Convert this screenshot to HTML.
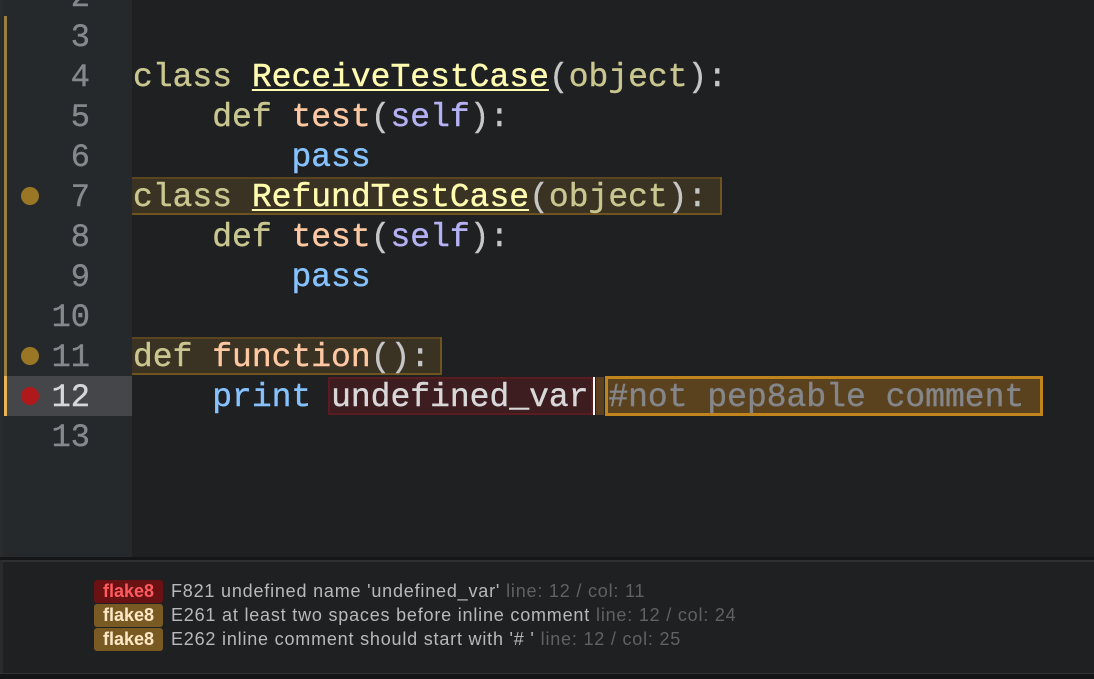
<!DOCTYPE html>
<html><head><meta charset="utf-8"><style>
body{margin:0;width:1094px;height:678px;background:#1f2022;overflow:hidden;position:relative;font-family:"Liberation Mono",monospace}
.gut{position:absolute;left:3px;top:0;width:129px;height:557px;background:#26292c}
.lb{position:absolute;left:0;top:0;width:3px;height:678px;background:#2a2b2d}
.gb{position:absolute;left:4px;top:16px;width:3px;height:360px;background:#9c7e45}
.gb2{position:absolute;left:4px;top:376px;width:3px;height:40px;background:#e6b55a}
.cur{position:absolute;left:7px;top:376px;width:125px;height:40px;background:#45464a}
.ln{position:absolute;width:90px;text-align:right;left:0;font-size:32px;color:#85888c;height:40px;line-height:44px;-webkit-text-stroke:0.4px currentColor}
.dot{position:absolute;left:21px;width:18px;height:18px;border-radius:50%}
.code{position:absolute;left:133px;font-size:33px;height:40px;line-height:44px;white-space:pre;color:#ccc;-webkit-text-stroke:0.4px currentColor}
.k{color:#c9c78f}.c{color:#fffcb0;text-decoration:underline;text-decoration-thickness:2px;text-underline-offset:3px}
.f{color:#fdc8a2}.s{color:#b4b2f5}.p{color:#86c2ff}.o{color:#c5c6c8}.w{color:#d8d8d8}.cm{color:#85868a}
.hl{position:absolute;background:#3a3222;box-shadow:inset 0 -2px 0 #6e5520,inset -2px 0 0 #6e5520,inset 0 2px 0 #5a4520}
.panel{position:absolute;left:3px;top:560px;width:1091px;height:113px;background:#1f2022;border-top:2px solid #2e3033}
.sep{position:absolute;left:0;top:557px;width:1094px;height:3px;background:#151617}
.bot{position:absolute;left:0;top:673px;width:1094px;height:5px;background:#141516;border-top:1px solid #333}
.row{position:absolute;left:94px;font-family:"Liberation Sans Narrow","Liberation Sans",sans-serif;font-size:18px;height:23px;line-height:23px;white-space:nowrap;color:#b8b9bb;letter-spacing:0.8px}
.b{display:inline-block;width:69px;text-align:center;border-radius:3px;font-weight:bold;margin-right:8px;color:#fde8c8;background:#7a5a23;letter-spacing:0}
.b.r{background:#6a1114;color:#ff5a5e}
.g{color:#5f6165;margin-left:6px}
</style></head><body>
<div class="gut"></div><div class="lb"></div>
<div class="cur"></div>
<div class="gb"></div><div class="gb2"></div>
<div class="ln" style="top:-24px">2</div>
<div class="ln" style="top:16px">3</div>
<div class="ln" style="top:56px">4</div>
<div class="ln" style="top:96px">5</div>
<div class="ln" style="top:136px">6</div>
<div class="ln" style="top:176px">7</div>
<div class="ln" style="top:216px">8</div>
<div class="ln" style="top:256px">9</div>
<div class="ln" style="top:296px">10</div>
<div class="ln" style="top:336px">11</div>
<div class="ln" style="top:376px;color:#d6d7d8">12</div>
<div class="ln" style="top:416px">13</div>
<div class="dot" style="top:187px;background:#9a7724"></div>
<div class="dot" style="top:347px;background:#9a7724"></div>
<div class="dot" style="top:387px;background:#b0191c"></div>
<div class="hl" style="left:132px;top:177px;width:590px;height:38px"></div>
<div class="hl" style="left:132px;top:337px;width:310px;height:38px"></div>
<div style="position:absolute;left:328px;top:377px;width:265px;height:38px;background:#3d1d20;box-shadow:inset 0 0 0 2px #5a1c20"></div>
<div style="position:absolute;left:593px;top:377px;width:2px;height:38px;background:#fff"></div>
<div style="position:absolute;left:596px;top:377px;width:8px;height:38px;background:#5c3f1e"></div>
<div style="position:absolute;left:605px;top:376px;width:438px;height:40px;background:#5a421f;box-shadow:inset 0 0 0 3px #c0841c"></div>
<div class="code" style="top:56px"><span class="k">class</span> <span class="c">ReceiveTestCase</span><span class="o">(</span><span class="k">object</span><span class="o">):</span></div>
<div class="code" style="top:96px">    <span class="k">def</span> <span class="f">test</span><span class="o">(</span><span class="s">self</span><span class="o">):</span></div>
<div class="code" style="top:136px">        <span class="p">pass</span></div>
<div class="code" style="top:176px"><span class="k">class</span> <span class="c">RefundTestCase</span><span class="o">(</span><span class="k">object</span><span class="o">):</span></div>
<div class="code" style="top:216px">    <span class="k">def</span> <span class="f">test</span><span class="o">(</span><span class="s">self</span><span class="o">):</span></div>
<div class="code" style="top:256px">        <span class="p">pass</span></div>
<div class="code" style="top:336px"><span class="k">def</span> <span class="f">function</span><span class="o">():</span></div>
<div class="code" style="top:376px">    <span class="p">print</span> <span class="w">undefined_var</span> <span class="cm">#not pep8able comment</span></div>
<div class="sep"></div>
<div class="panel"></div>
<div class="bot"></div>
<div class="row" style="top:580px"><span class="b r">flake8</span>F821 undefined name 'undefined_var'<span class="g">line: 12 / col: 11</span></div>
<div class="row" style="top:604px"><span class="b">flake8</span>E261 at least two spaces before inline comment<span class="g">line: 12 / col: 24</span></div>
<div class="row" style="top:628px"><span class="b">flake8</span>E262 inline comment should start with '# '<span class="g">line: 12 / col: 25</span></div>
</body></html>
